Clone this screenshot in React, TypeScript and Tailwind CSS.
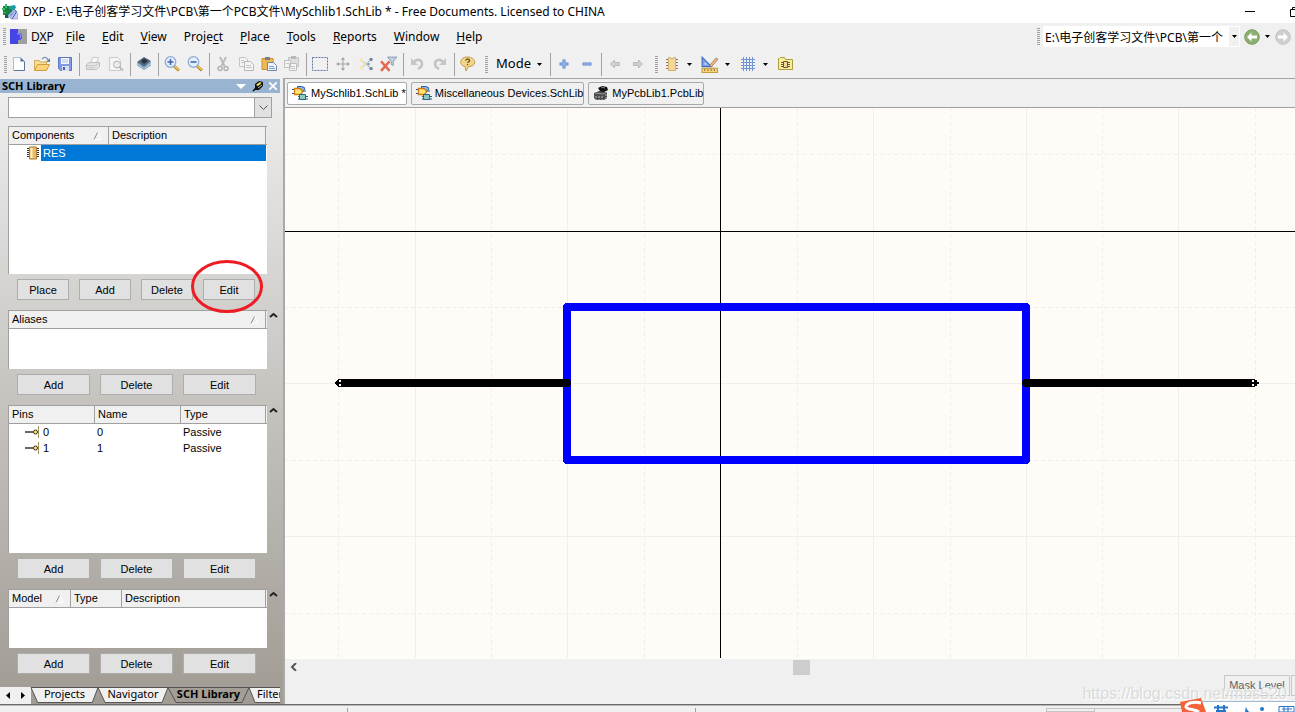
import { useState, type ReactNode } from "react"
import clsx from "clsx"

const uiFont = "font-['Noto_Sans','Noto_Sans_CJK_SC',sans-serif]"
const panelFont = "font-['Liberation_Sans','Noto_Sans_CJK_SC',sans-serif]"

/* ---------- icons ---------- */

function Svg({ children, size = 16 }: { children: ReactNode; size?: number }) {
  return (
    <svg width={size} height={size} viewBox="0 0 16 16" fill="none" className="shrink-0" aria-hidden="true">
      {children}
    </svg>
  )
}

const AppIcon = () => (
  <Svg>
    <path d="M1 2h6v2h3v7H1z" fill="#17823e" />
    <path d="M0 4h3v2H0zM1 8h3v1H1zM3 0h2v4H3z" fill="#35bd70" />
    <path d="M7 2l6-1 1 3-3 2-4-1z" fill="#1b9aa0" />
    <path d="M4 13l8-8 2 2-8 7z" fill="#9ab7e8" stroke="#46609f" strokeWidth="0.7" />
    <path d="M8 14l5-7 3 3v5H9z" fill="#c5cff3" stroke="#7c8fd4" strokeWidth="0.6" />
    <path d="M10 15l5-8" stroke="#3f51b0" />
    <path d="M3 11h3v3H3z" fill="#1c5a33" />
  </Svg>
)

const DxpIcon = () => (
  <svg width="17" height="15" viewBox="0 0 17 15" className="shrink-0" aria-hidden="true">
    <path d="M8 0h9v15H8z" fill="#a0a0a0" />
    <path d="M0 0h8v4h1c4 0 4 7 0 7H8v4H0z" fill="#4646e6" />
    <path d="M7 5c3-1 5 1 3 4" fill="none" stroke="#a9a9ff" />
  </svg>
)

const NewIcon = () => (
  <Svg>
    <path d="M2.500 1.500h7l4 4v9h-11z" fill="#fbfdff" stroke="#a9bdd4" />
    <path d="M9.500 1.500v4h4z" fill="#4d6f96" />
    <path d="M13.500 5.500v9H3" stroke="#5a7696" />
  </Svg>
)

const OpenIcon = () => (
  <Svg>
    <path d="M.5 14V4.500h5l1 1.500h6v3" fill="#f7dd91" stroke="#d3aa55" />
    <path d="M.5 14.500l3-6h12l-3 6z" fill="#fbd477" stroke="#cf9d40" />
    <path d="M8 3c2-2.500 5-2 6 1" stroke="#8095ab" strokeWidth="1.300" />
    <path d="M16 2v4h-4z" fill="#6681a0" />
  </Svg>
)

const SaveIcon = () => (
  <Svg>
    <path d="M1.500 1.500h13v13h-11l-2-2z" fill="#7f9be6" stroke="#6474c0" />
    <path d="M4 2h8v6H4z" fill="#f2f6ff" />
    <path d="M5 4h6M5 6h6" stroke="#b6c4de" />
    <path d="M5 10h7v5H5z" fill="#d9e0f0" />
    <path d="M6 11h2v3H6z" fill="#4d5ca8" />
  </Svg>
)

const PrintIcon = () => (
  <Svg>
    <path d="M5.500 7l2-5.500h6l-2 5.500z" fill="#f8f8f8" stroke="#c8c8c8" />
    <path d="M1.500 8.500l3-2h10v4l-3 3h-10z" fill="#e4e4e4" stroke="#bdbdbd" />
    <path d="M2 9.500h9l3-2.500M3 11.500h7" stroke="#cacaca" />
  </Svg>
)

const PreviewIcon = () => (
  <Svg>
    <path d="M1.500 1.500h8l3 3v10h-11z" fill="#f6f6f6" stroke="#cacaca" />
    <circle cx="9" cy="8.500" r="3.500" fill="#ebebeb" stroke="#b2b2b2" />
    <path d="M11.500 11l3.500 3.500" stroke="#bababa" strokeWidth="2" />
  </Svg>
)

const LayersIcon = () => (
  <Svg>
    <path d="M1 7l7-3 7 3v2l-7 5-7-5z" fill="#a9cbe8" />
    <path d="M1 9l7 4.500L15 9" stroke="#86a6c4" />
    <path d="M1 6l7-5 7 4-7 6z" fill="#55697e" />
    <path d="M5 5l3-2.500L12 5 8 8z" fill="#26323e" />
    <path d="M1 6.500l7 5 7-5.500" stroke="#7b97b4" />
  </Svg>
)

const ZoomIcon = ({ plus = false }: { plus?: boolean }) => (
  <Svg>
    <path d="M10 10l5 4.500" stroke="#b48228" strokeWidth="3" />
    <path d="M10.500 10l4.500 4" stroke="#f6c95e" strokeWidth="1.500" />
    <circle cx="6.500" cy="6" r="5.300" fill="#e3efff" stroke="#90a9cf" strokeWidth="1.200" />
    <path d={plus ? "M3.500 6h6M6.500 3v6" : "M3.500 6h6"} stroke="#4466b0" strokeWidth="1.600" />
  </Svg>
)

const CutIcon = () => (
  <Svg>
    <path d="M5 1l4.500 9M11 1L6.500 10" stroke="#b9b9b9" strokeWidth="1.800" />
    <circle cx="5" cy="12.500" r="2" stroke="#b2b2b2" strokeWidth="1.500" />
    <circle cx="11" cy="12.500" r="2" stroke="#b2b2b2" strokeWidth="1.500" />
  </Svg>
)

const CopyIcon = () => (
  <Svg>
    <path d="M1.500 1.500h6l2 2v7h-8z" fill="#f4f4f4" stroke="#c4c4c4" />
    <path d="M6.500 5.500h6l3 3v6h-9z" fill="#f4f4f4" stroke="#b8b8b8" />
    <path d="M3 4.500h3M3 6.500h3M8 9.500h5M8 11.500h6" stroke="#c6c6c6" />
  </Svg>
)

const PasteIcon = () => (
  <Svg>
    <path d="M1 2.500h11v11H1z" fill="#eeb852" stroke="#c4923a" />
    <path d="M4 1h5v3H4z" fill="#7d7d86" />
    <path d="M6.500 6.500h6l3 3v5h-9z" fill="#edf3fc" stroke="#7189ad" />
    <path d="M8 10.500h5M8 12.500h6" stroke="#8aa2c6" />
  </Svg>
)

const PasteMultiIcon = () => (
  <Svg>
    <path d="M4.500 1.500h10v9h-10z" fill="#dedede" stroke="#c2c2c2" />
    <path d="M7 0h5v3H7z" fill="#b9b9b9" />
    <path d="M.5 4.500h6v7h-6zM5.500 7.500h7v7h-7z" fill="#f3f3f3" stroke="#bfbfbf" />
    <path d="M2 7.500h3M7 10.500h4M7 12.500h4" stroke="#c6c6c6" />
  </Svg>
)

const SelectIcon = () => (
  <Svg>
    <path d="M.5 1.500h15v13H.5z" stroke="#5f7b9e" strokeDasharray="2 1" />
  </Svg>
)

const MoveIcon = () => (
  <Svg>
    <path d="M8 2v12M2 8h12" stroke="#a2a2a2" />
    <path d="M8 1L6 4h4zM8 15l-2-3h4zM1 8l3-2v4zM15 8l-3-2v4z" fill="#a5a5a5" />
  </Svg>
)

const DeselectIcon = () => (
  <Svg>
    <path d="M3 4l8 7M3 12l8-7" stroke="#8fa2b8" strokeDasharray="2 1" />
    <circle cx="3" cy="4" r="1.800" fill="#f5e9a0" />
    <circle cx="3" cy="12" r="1.800" fill="#f5e9a0" />
    <circle cx="13" cy="3.500" r="1.800" fill="#7188a5" />
    <circle cx="10.500" cy="8" r="1.500" fill="#8fa2b8" />
    <circle cx="13" cy="12.500" r="1.800" fill="#7188a5" />
    <circle cx="7" cy="8" r="1.300" fill="#f0e391" />
  </Svg>
)

const ClearFilterIcon = () => (
  <Svg size={17}>
    <path d="M1 5l8 9M9 5l-8 9" stroke="#e5674e" strokeWidth="2.300" />
    <path d="M7 1h9l-3.500 4v4l-2-1V5z" fill="#c2d1e1" stroke="#7f96b1" strokeWidth="0.800" />
  </Svg>
)

const UndoIcon = ({ flip = false }: { flip?: boolean }) => (
  <Svg>
    <g transform={flip ? "translate(16 0) scale(-1 1)" : undefined}>
      <path d="M5 6c3-4 8-2 8 2 0 3-2 4-4 5" stroke="#c2c2c2" strokeWidth="2.400" />
      <path d="M2 2v7h7z" fill="#c6c6c6" />
    </g>
  </Svg>
)

const HelpIcon = () => (
  <Svg>
    <path d="M7 1c10 0 10 10 1.500 9.500L6 15l-1-4.500C-2 9 0 1 7 1z" fill="#f4d587" stroke="#c09c50" />
    <path d="M5.500 4.500c1-2 4.500-1.500 4 .5-.3 1-2 1-2 2M7.500 8v1.300" stroke="#655028" strokeWidth="1.300" />
  </Svg>
)

const PlusIcon = ({ minus = false }: { minus?: boolean }) => (
  <Svg>
    <path d={minus ? "M3.500 8h9" : "M3.500 8h9M8 3.500v9"} stroke="#6089cf" strokeWidth="3" />
    <path d={minus ? "M4.500 8h7" : "M4.500 8h7M8 4.500v7"} stroke="#a5c3f3" />
  </Svg>
)

const ArrowIcon = ({ right = false }: { right?: boolean }) => (
  <Svg>
    <path
      transform={right ? "translate(16 0) scale(-1 1)" : undefined}
      d="M3.500 8l4-4v2.500h5v3h-5V12z"
      fill="#d2d2d2"
      stroke="#b9b9b9"
    />
  </Svg>
)

const ChipIcon = () => (
  <Svg>
    <path d="M2 3.500h12M2 6.500h12M2 9.500h12M2 12.500h12" stroke="#8e7650" />
    <path d="M4.500 1.500h2c0 1.500 3 1.500 3 0h2v13h-7z" fill="#f5d696" stroke="#cdb072" />
  </Svg>
)

const DrawIcon = () => (
  <Svg size={17}>
    <path d="M1 1v9h9z" fill="#7ea2e6" stroke="#426cbd" />
    <path d="M3.500 6v2h2z" fill="#fff" />
    <path d="M8 9l6-7 2 1-6 7z" fill="#e7bd8b" stroke="#a06a4f" strokeWidth="0.700" />
    <path d="M1 11.500h14.500v4H1z" fill="#f6d67b" stroke="#c79c42" />
    <path d="M3.500 12v2M6.500 12v2M9.500 12v2M12.500 12v2" stroke="#98732b" />
  </Svg>
)

const GridIcon = () => (
  <Svg>
    <path d="M1 3.500h14M1 6.500h14M1 9.500h14M1 12.500h14M3.500 1v14M6.500 1v14M9.500 1v14M12.500 1v14" stroke="#6e94d3" />
  </Svg>
)

const FolderChipIcon = () => (
  <Svg>
    <path d="M.5 13.500v-11h1l1-1h4l1 2h7v10z" fill="#f7eda0" stroke="#ac9e3c" />
    <path d="M3 6.500h9M3 8.500h9M3 10.500h9" stroke="#695b31" />
    <path d="M5.500 5.500h4v6h-4z" fill="#f3d795" stroke="#695b31" />
  </Svg>
)

const SchIcon = () => (
  <Svg>
    <path d="M8 3h5M8 6h6M0 4.500h4M0 8.500h4M6 14h10M6 11.500h10" stroke="#274e8d" />
    <path d="M5.500 1.500h4c5 1 3 4 1 5h-5z" fill="#8abcf5" stroke="#2458a5" />
    <path d="M2.500 3.500h4c5 0 5 6 0 6h-4z" fill="#ffe675" stroke="#d07a10" strokeWidth="1.300" />
    <path d="M7.500 9.500h6v5h-6z" fill="#8fcbb5" stroke="#24668d" />
  </Svg>
)

const PcbIcon = () => (
  <Svg>
    <path d="M1 8l8-3 5 3v5l-3 2H3l-2-2z" fill="#4b4b4b" />
    <path d="M5 3l4-2 5 1 1 3-4 2-4-1z" fill="#111" />
    <path d="M2 8l8 1 4-2" stroke="#999" />
    <path d="M3 11v4M6 11v4M9 11v4M13 9v4" stroke="#bababa" strokeDasharray="2 1" />
    <path d="M8 2l4 1" stroke="#858585" />
  </Svg>
)

const PartIcon = () => (
  <svg width="14" height="14" viewBox="0 0 14 14" className="shrink-0" aria-hidden="true">
    <path d="M1 2.500h12M1 4.500h12M1 6.500h12M1 8.500h12M1 10.500h12" stroke="#333" />
    <path d="M3.500 1h7v12h-7z" fill="#e9bb68" stroke="#a87f3a" />
    <path d="M5.500 2v10" stroke="#fff0be" strokeWidth="2" />
  </svg>
)

const PinIcon = () => (
  <svg width="16" height="14" viewBox="0 0 16 14" className="shrink-0" aria-hidden="true">
    <path d="M1 7h8" stroke="#493022" strokeWidth="1.500" />
    <path d="M14.500 1v12" stroke="#9f9058" />
    <circle cx="11.500" cy="7" r="2" fill="#ffee83" stroke="#302313" />
  </svg>
)

const SortMark = () => (
  <svg width="9" height="8" viewBox="0 0 9 8" className="mr-[6px] shrink-0" aria-hidden="true">
    <path d="M5 .5l3 7H1" fill="none" stroke="#fff" />
    <path d="M1 7.500L4.500 .5" fill="none" stroke="#8c8c8c" />
  </svg>
)

const DownTriangle = () => (
  <svg width="5" height="3" viewBox="0 0 5 3" className="shrink-0" aria-hidden="true">
    <path d="M0 0h5L2.500 3z" fill="#000" />
  </svg>
)

const Collapse = () => (
  <button aria-label="Collapse" className="mt-[2px] ml-[2px] self-start">
    <svg width="9" height="6" viewBox="0 0 9 6" className="block" aria-hidden="true">
      <path d="M1 5l3.500-3L8 5" fill="none" stroke="#222" strokeWidth="2" />
    </svg>
  </button>
)

const NavIcon = ({ forward = false }: { forward?: boolean }) => (
  <Svg>
    <circle cx="8" cy="8" r="7.300" fill={forward ? "#cfcfcf" : "#8bb070"} stroke={forward ? "#c2c2c2" : "#789a62"} />
    <path
      transform={forward ? "translate(16 0) scale(-1 1)" : undefined}
      d="M3 8l4.500-4.500v3H13v3H7.500v3z"
      fill="#fff"
    />
  </Svg>
)

/* ---------- small pieces ---------- */

function Grip() {
  return (
    <span className="h-[17px] w-[3px] shrink-0 bg-[repeating-linear-gradient(to_bottom,#a0a0a0_0px,#a0a0a0_1px,transparent_1px,transparent_2px)]" />
  )
}

function Tool({ label, children }: { label: string; children: ReactNode }) {
  return (
    <button title={label} className="flex h-6 w-[23px] shrink-0 items-center justify-center">
      {children}
    </button>
  )
}

function DropArrow({ label }: { label: string }) {
  return (
    <button aria-label={label} className="mr-[2px] flex h-6 w-[13px] shrink-0 items-center justify-center">
      <DownTriangle />
    </button>
  )
}

function Sep() {
  return <span className="mr-px ml-[3px] h-[23px] w-px shrink-0 bg-[#a0a0a0]" />
}

function PushButton({ children, wide = true }: { children: ReactNode; wide?: boolean }) {
  return (
    <button
      className={clsx(
        "h-[21px] border border-[#adadad] bg-[#e1e1e1] text-center leading-5",
        wide ? "w-[73px]" : "w-[52px]",
      )}
    >
      {children}
    </button>
  )
}

function ButtonRow() {
  return (
    <div className="mt-[5px] mb-[10px] ml-[9px] flex gap-[10px]">
      <PushButton>Add</PushButton>
      <PushButton>Delete</PushButton>
      <PushButton>Edit</PushButton>
    </div>
  )
}

function Th({ children, width, sort, last }: { children: ReactNode; width?: string; sort?: boolean; last?: boolean }) {
  return (
    <th className={clsx("border-b border-[#a0a0a0] bg-[#f0f0f0] p-0 text-left font-normal", width)}>
      <div className={clsx("flex h-[17px] items-center justify-between border-r border-[#a0a0a0] pl-[3px] leading-[17px]", last && "mr-px")}>
        {children}
        {sort && <SortMark />}
      </div>
    </th>
  )
}

function ListBox({ children, tall = false }: { children: ReactNode; tall?: boolean }) {
  return (
    <div
      className={clsx(
        "w-[259px] border-t border-l border-[#a0a0a0] bg-white",
        tall ? "h-[148px]" : "h-[59px]",
      )}
    >
      <table className="w-full table-fixed border-separate border-spacing-0">{children}</table>
    </div>
  )
}

/* ---------- bars ---------- */

const menus = [
  { pre: "", key: "F", post: "ile" },
  { pre: "", key: "E", post: "dit" },
  { pre: "", key: "V", post: "iew" },
  { pre: "Proje", key: "c", post: "t" },
  { pre: "", key: "P", post: "lace" },
  { pre: "", key: "T", post: "ools" },
  { pre: "", key: "R", post: "eports" },
  { pre: "", key: "W", post: "indow" },
  { pre: "", key: "H", post: "elp" },
]

function TitleBar() {
  return (
    <header className="flex h-[23px] shrink-0 items-center bg-white pl-[2px] text-[12px]">
      <AppIcon />
      <h1 className="ml-[5px] flex-1 whitespace-nowrap">
        DXP - E:\电子创客学习文件\PCB\第一个PCB文件\MySchlib1.SchLib * - Free Documents. Licensed to CHINA
      </h1>
      <button aria-label="Minimize" className="mr-[35px]">
        <span className="block h-px w-[10px] bg-black" />
      </button>
      <button aria-label="Restore" className="w-[5px] overflow-hidden">
        <svg width="10" height="10" viewBox="0 0 10 10" fill="none" stroke="#000" className="max-w-none" aria-hidden="true">
          <path d="M.5 2.500h7v7h-7zM2.500 2V.5h7v7H8" />
        </svg>
      </button>
    </header>
  )
}

function MenuBar() {
  const [path, setPath] = useState("E:\\电子创客学习文件\\PCB\\第一个")
  return (
    <nav className="flex h-[27px] shrink-0 items-center pl-[3px] text-[12px]">
      <Grip />
      <button className="mr-3 ml-1 flex items-center gap-1">
        <DxpIcon />
        <span>
          D<span className="underline underline-offset-2">X</span>P
        </span>
      </button>
      <div className="flex flex-1 gap-[17px]">
        {menus.map((m) => (
          <button key={m.pre + m.key + m.post}>
            {m.pre}
            <span className="underline underline-offset-2">{m.key}</span>
            {m.post}
          </button>
        ))}
      </div>
      <Grip />
      <input
        aria-label="Address"
        value={path}
        onChange={(e) => setPath(e.target.value)}
        className="ml-[3px] h-[21px] w-[185px] bg-white pl-[2px] outline-none"
      />
      <button aria-label="Address list" className="flex h-[21px] w-[12px] items-center justify-center border border-white">
        <DownTriangle />
      </button>
      <button aria-label="Back" className="ml-1">
        <NavIcon />
      </button>
      <button aria-label="Back history" className="flex w-[15px] justify-center">
        <DownTriangle />
      </button>
      <button aria-label="Forward" className="mr-1">
        <NavIcon forward />
      </button>
    </nav>
  )
}

function Toolbar() {
  return (
    <div className="flex h-7 shrink-0 items-center pl-1 text-[13px]">
      <Grip />
      <Tool label="New"><NewIcon /></Tool>
      <Tool label="Open"><OpenIcon /></Tool>
      <Tool label="Save"><SaveIcon /></Tool>
      <Sep />
      <Tool label="Print"><PrintIcon /></Tool>
      <Tool label="Print preview"><PreviewIcon /></Tool>
      <Sep />
      <Tool label="Devices view"><LayersIcon /></Tool>
      <Sep />
      <Tool label="Zoom in"><ZoomIcon plus /></Tool>
      <Tool label="Zoom out"><ZoomIcon /></Tool>
      <Sep />
      <Tool label="Cut"><CutIcon /></Tool>
      <Tool label="Copy"><CopyIcon /></Tool>
      <Tool label="Paste"><PasteIcon /></Tool>
      <Tool label="Paste array"><PasteMultiIcon /></Tool>
      <Sep />
      <Tool label="Select"><SelectIcon /></Tool>
      <Tool label="Move"><MoveIcon /></Tool>
      <Tool label="Deselect"><DeselectIcon /></Tool>
      <Tool label="Clear filter"><ClearFilterIcon /></Tool>
      <Sep />
      <Tool label="Undo"><UndoIcon /></Tool>
      <Tool label="Redo"><UndoIcon flip /></Tool>
      <Sep />
      <Tool label="Help"><HelpIcon /></Tool>
      <span className="ml-[6px] flex">
        <Grip />
      </span>
      <button className="flex w-[59px] items-center justify-between pr-[5px] pl-2">
        Mode <DownTriangle />
      </button>
      <Sep />
      <Tool label="Add part"><PlusIcon /></Tool>
      <Tool label="Remove part"><PlusIcon minus /></Tool>
      <Sep />
      <Tool label="Previous"><ArrowIcon /></Tool>
      <Tool label="Next"><ArrowIcon right /></Tool>
      <span className="mr-[2px] ml-[6px] flex">
        <Grip />
      </span>
      <Tool label="IEEE symbols"><ChipIcon /></Tool>
      <DropArrow label="IEEE symbols list" />
      <Tool label="Drawing tools"><DrawIcon /></Tool>
      <DropArrow label="Drawing tools list" />
      <Tool label="Grids"><GridIcon /></Tool>
      <DropArrow label="Grids list" />
      <Tool label="Model manager"><FolderChipIcon /></Tool>
    </div>
  )
}

/* ---------- library panel ---------- */

const pins = [
  { pin: "0", name: "0", type: "Passive" },
  { pin: "1", name: "1", type: "Passive" },
]

function LibraryPanel() {
  return (
    <aside className="flex w-[285px] shrink-0 flex-col border-r-2 border-[#a9a9a9] bg-[#f0f0f0]">
      <div className="flex min-h-0 flex-1 flex-col bg-linear-to-b from-[#f0f0f0] to-[#a09b93] pt-px">
        <div className="mr-[3px] flex h-[14px] shrink-0 items-center bg-[#99b4d1] pr-[3px] pl-[2px]">
          <h2 className="flex-1 text-[11px] leading-[14px] font-bold">SCH Library</h2>
          <button aria-label="Panel menu">
            <svg width="10" height="5" viewBox="0 0 10 5" aria-hidden="true">
              <path d="M0 0h10L5 5z" fill="#fff" />
            </svg>
          </button>
          <button aria-label="Pin panel" className="ml-[6px]">
            <svg width="12" height="12" viewBox="0 0 12 12" aria-hidden="true">
              <path d="M1 11l3-3" stroke="#000" strokeWidth="1.500" />
              <path d="M3 4l4-3 4 1v4L7 10H3z" fill="#111" />
              <path d="M4 5l4-3 1.500 1L6 6z" fill="#ffed4d" />
              <path d="M6 8l4-3" stroke="#bbb" />
            </svg>
          </button>
          <button aria-label="Close panel" className="ml-[5px]">
            <svg width="8" height="8" viewBox="0 0 8 8" aria-hidden="true">
              <path d="M0 0l8 8M8 0L0 8" stroke="#fff" strokeWidth="1.600" />
            </svg>
          </button>
        </div>

        <div className={clsx("flex flex-col pt-1 pl-2 text-[11px]", panelFont)}>
          <div className="grid w-[264px]">
            <select
              aria-label="Component mask"
              className="col-start-1 row-start-1 h-[21px] appearance-none border border-[#a0a0a0] bg-white"
            >
              <option></option>
            </select>
            <span className="pointer-events-none z-10 col-start-1 row-start-1 flex h-[21px] w-[18px] items-center justify-center justify-self-end border border-[#a0a0a0] bg-[#e1e1e1]">
              <svg width="9" height="6" viewBox="0 0 9 6" aria-hidden="true">
                <path d="M.5.5l4 4 4-4" fill="none" stroke="#555" />
              </svg>
            </span>
          </div>

          <div className="mt-2">
            <ListBox tall>
              <thead>
                <tr>
                  <Th width="w-[100px]" sort>Components</Th>
                  <Th last>Description</Th>
                </tr>
              </thead>
              <tbody>
                <tr>
                  <td colSpan={2} className="p-0">
                    <div className="flex h-4 items-center pr-px pl-[17px]">
                      <PartIcon />
                      <span className="ml-px h-4 flex-1 bg-[#0078d7] pl-[2px] leading-4 text-white">RES</span>
                    </div>
                  </td>
                </tr>
              </tbody>
            </ListBox>
          </div>

          <div className="mt-[5px] mb-[10px] ml-[9px] flex gap-[10px]">
            <PushButton wide={false}>Place</PushButton>
            <PushButton wide={false}>Add</PushButton>
            <PushButton wide={false}>Delete</PushButton>
            <div className="relative">
              <PushButton wide={false}>Edit</PushButton>
              {/* hand-drawn highlight */}
              <svg
                width="72"
                height="54"
                viewBox="0 0 72 54"
                className="pointer-events-none absolute -top-5 -left-3 max-w-none"
                aria-hidden="true"
              >
                <ellipse cx="36" cy="27.500" rx="34.500" ry="25" fill="none" stroke="#ed1c24" strokeWidth="3" />
              </svg>
            </div>
          </div>

          <div className="flex">
            <ListBox>
              <thead>
                <tr>
                  <Th sort last>Aliases</Th>
                </tr>
              </thead>
            </ListBox>
            <Collapse />
          </div>
          <ButtonRow />

          <div className="flex">
            <ListBox tall>
              <thead>
                <tr>
                  <Th width="w-[86px]">Pins</Th>
                  <Th width="w-[86px]">Name</Th>
                  <Th last>Type</Th>
                </tr>
              </thead>
              <tbody>
                {pins.map((p) => (
                  <tr key={p.pin} className="h-4 leading-4">
                    <td className="p-0">
                      <div className="flex h-4 items-center gap-[3px] pl-[15px]">
                        <PinIcon />
                        {p.pin}
                      </div>
                    </td>
                    <td className="p-0 pl-[2px]">{p.name}</td>
                    <td className="p-0 pl-[2px]">{p.type}</td>
                  </tr>
                ))}
              </tbody>
            </ListBox>
            <Collapse />
          </div>
          <ButtonRow />

          <div className="flex">
            <ListBox>
              <thead>
                <tr>
                  <Th width="w-[62px]" sort>Model</Th>
                  <Th width="w-[51px]">Type</Th>
                  <Th last>Description</Th>
                </tr>
              </thead>
            </ListBox>
            <Collapse />
          </div>
          <ButtonRow />
        </div>

        <PanelTabs />
      </div>
    </aside>
  )
}

const panelTabs = [
  { label: "Projects", width: "w-[67px] text-center" },
  { label: "Navigator", width: "w-[70px] text-center" },
  { label: "SCH Library", width: "w-[81px] text-center" },
  { label: "Filter", width: "w-[60px] pl-2 text-left" },
]

function PanelTabs() {
  const [active, setActive] = useState("SCH Library")
  return (
    <div className="mt-auto mr-[3px] flex h-[17px] shrink-0 overflow-hidden text-[11px]">
      <div className="flex w-[31px] shrink-0 items-center justify-center gap-[9px] bg-[#f0f0f0]">
        <button aria-label="Scroll tabs left">
          <svg width="5" height="7" viewBox="0 0 5 7" aria-hidden="true">
            <path d="M4 0v7L0 3.500z" />
          </svg>
        </button>
        <button aria-label="Scroll tabs right">
          <svg width="5" height="7" viewBox="0 0 5 7" aria-hidden="true">
            <path d="M1 0v7l4-3.500z" />
          </svg>
        </button>
      </div>
      {panelTabs.map((t) => (
        <button
          key={t.label}
          onClick={() => setActive(t.label)}
          className={clsx("relative flex h-[17px] shrink-0 flex-col leading-[13px]", t.width, active === t.label && "font-bold")}
        >
          <svg
            viewBox="0 0 70 16"
            preserveAspectRatio="none"
            className="absolute inset-y-0 left-0 h-4 w-full overflow-visible"
            aria-hidden="true"
          >
            <path
              d="M0 .5h70l-6 15H7z"
              fill={active === t.label ? "#a39e96" : "#f0f0f0"}
              stroke="#555"
              vectorEffect="non-scaling-stroke"
            />
          </svg>
          <span className="relative">{t.label}</span>
        </button>
      ))}
    </div>
  )
}

/* ---------- editor ---------- */

const documents = [
  { name: "MySchlib1.SchLib *", icon: <SchIcon />, active: true },
  { name: "Miscellaneous Devices.SchLib", icon: <SchIcon />, active: false },
  { name: "MyPcbLib1.PcbLib", icon: <PcbIcon />, active: false },
]

function DocumentTabs() {
  return (
    <div className={clsx("flex h-[30px] shrink-0 items-center gap-1 border-y border-[#a0a0a0] pl-[2px] text-[11px]", panelFont)}>
      {documents.map((d) => (
        <button
          key={d.name}
          className={clsx(
            "flex h-[23px] items-center gap-[3px] rounded-[2px] border border-[#a9a9a9] pl-1 whitespace-nowrap",
            d.active ? "bg-white" : "bg-[#f0f0f0]",
          )}
        >
          {d.icon}
          {d.name}
        </button>
      ))}
    </div>
  )
}

const solidX = [130, 282, 588, 741, 893]
const dashedX = [53, 206, 359, 512, 665, 817, 970]
const solidY = [275, 428]
const dashedY = [46, 199, 352, 505]

function Sheet() {
  return (
    <div className="min-h-0 flex-1 overflow-hidden border-b border-white bg-[#fffcf7]">
      <svg className="block h-full w-full" fill="none" shapeRendering="crispEdges" aria-label="RES symbol">
        <g stroke="#efefec">
          {solidX.map((x) => (
            <line key={x} x1={x + 0.5} x2={x + 0.5} y1="0" y2="100%" />
          ))}
          {solidY.map((y) => (
            <line key={y} x1="0" x2="100%" y1={y + 0.5} y2={y + 0.5} />
          ))}
          <g strokeDasharray="4 3">
            {dashedX.map((x) => (
              <line key={x} x1={x + 0.5} x2={x + 0.5} y1="0" y2="100%" />
            ))}
            {dashedY.map((y) => (
              <line key={y} x1="0" x2="100%" y1={y + 0.5} y2={y + 0.5} />
            ))}
          </g>
        </g>
        <path d="M0 123.500H4000M435.500 0V4000" stroke="#000" />
        <rect x="282" y="199" width="459" height="153" stroke="#00f" strokeWidth="8" strokeLinejoin="round" />
        <path d="M55 275H282M741 275H968" stroke="#000" strokeWidth="8" strokeLinecap="round" />
        <path d="M50 275h6M53 272v6M968 275h6M971 272v6" stroke="#000" strokeWidth="2" />
        <path d="M54 272h2v2h-2zM54 276h2v2h-2zM967 272h2v2h-2zM967 276h2v2h-2z" fill="#fff" />
      </svg>
    </div>
  )
}

function Editor() {
  return (
    <main className="flex min-w-0 flex-1 flex-col">
      <DocumentTabs />
      <Sheet />
      <div className="flex h-4 shrink-0 items-center">
        <button aria-label="Scroll left" className="ml-[5px]">
          <svg width="7" height="8" viewBox="0 0 7 8" className="block" aria-hidden="true">
            <path d="M6 0L2 4l4 4" fill="none" stroke="#555" strokeWidth="2" />
          </svg>
        </button>
        <div className="flex flex-1 justify-center pl-[11px]">
          <span className="h-[15px] w-[17px] self-start bg-[#cdcdcd]" />
        </div>
      </div>
      <div className={clsx("flex h-[29px] shrink-0 justify-end gap-px text-[11px]", panelFont)}>
        <button className="h-[21px] w-[66px] border border-[#c8c8c8] whitespace-nowrap text-[#606060]">Mask Level</button>
        <button aria-label="Clear" className="h-[21px] w-1 border-y border-l border-[#c8c8c8]" />
      </div>
    </main>
  )
}

function StatusBar() {
  return (
    <footer className="flex h-2 shrink-0 overflow-hidden border-t border-[#696969] text-[11px] shadow-[inset_0_1px_0_#b8b8b8]">
      <span className="mt-[3px] w-[348px] border-r border-[#a0a0a0] pl-1 leading-4 whitespace-nowrap">X:-20 Y:-20&nbsp;&nbsp; Grid:10</span>
      <span className="mt-[3px] w-[348px] border-r border-[#a0a0a0]" />
      <span className="flex-1" />
      <span className="mt-[3px] w-[49px] border border-[#c4c4c4]" />
      <span className="mt-[3px] w-[200px] border-t border-[#c4c4c4]" />
    </footer>
  )
}

/* input method bar that floats over the bottom corner */
function ImeBar() {
  return (
    <div className="absolute right-0 bottom-0 h-[14px] w-[116px] overflow-hidden">
      <svg width="116" height="14" viewBox="0 0 116 14" aria-hidden="true">
        <path d="M22 4h94v10H22z" fill="#fff" />
        <path d="M22 3.500h94" stroke="#9eb9d2" />
        <path d="M1 4l21-4 5 14H3z" fill="#f4623a" />
        <path d="M22 5c-7-2-15 0-15 4 1 3 9 2 13 5" fill="none" stroke="#fff" strokeWidth="3" />
        <path d="M35 9.500h14M39 7v5M45 7v5M37 13h10" fill="none" stroke="#2475c9" strokeWidth="2" />
        <path d="M67 8c0 3 2 4 3 6h-4z" fill="#2475c9" />
        <circle cx="83" cy="11" r="2" fill="#2475c9" />
        <path d="M100 8.500h15V14h-15zM103 11h10M105 9v5M109 9v5" fill="none" stroke="#2475c9" />
      </svg>
    </div>
  )
}

export default function App() {
  return (
    <div className={clsx("relative flex h-screen flex-col overflow-hidden bg-[#f0f0f0] text-black", uiFont)}>
      <TitleBar />
      <MenuBar />
      <Toolbar />
      <div className="flex min-h-0 flex-1">
        <LibraryPanel />
        <Editor />
      </div>
      <StatusBar />
      <p className="pointer-events-none absolute right-2 bottom-[6px] font-['Liberation_Sans',sans-serif] text-[16px] text-[#dadada] [text-shadow:1px_1px_0_#fff]">
        https://blog.csdn.net/mbs520
      </p>
      <ImeBar />
    </div>
  )
}
